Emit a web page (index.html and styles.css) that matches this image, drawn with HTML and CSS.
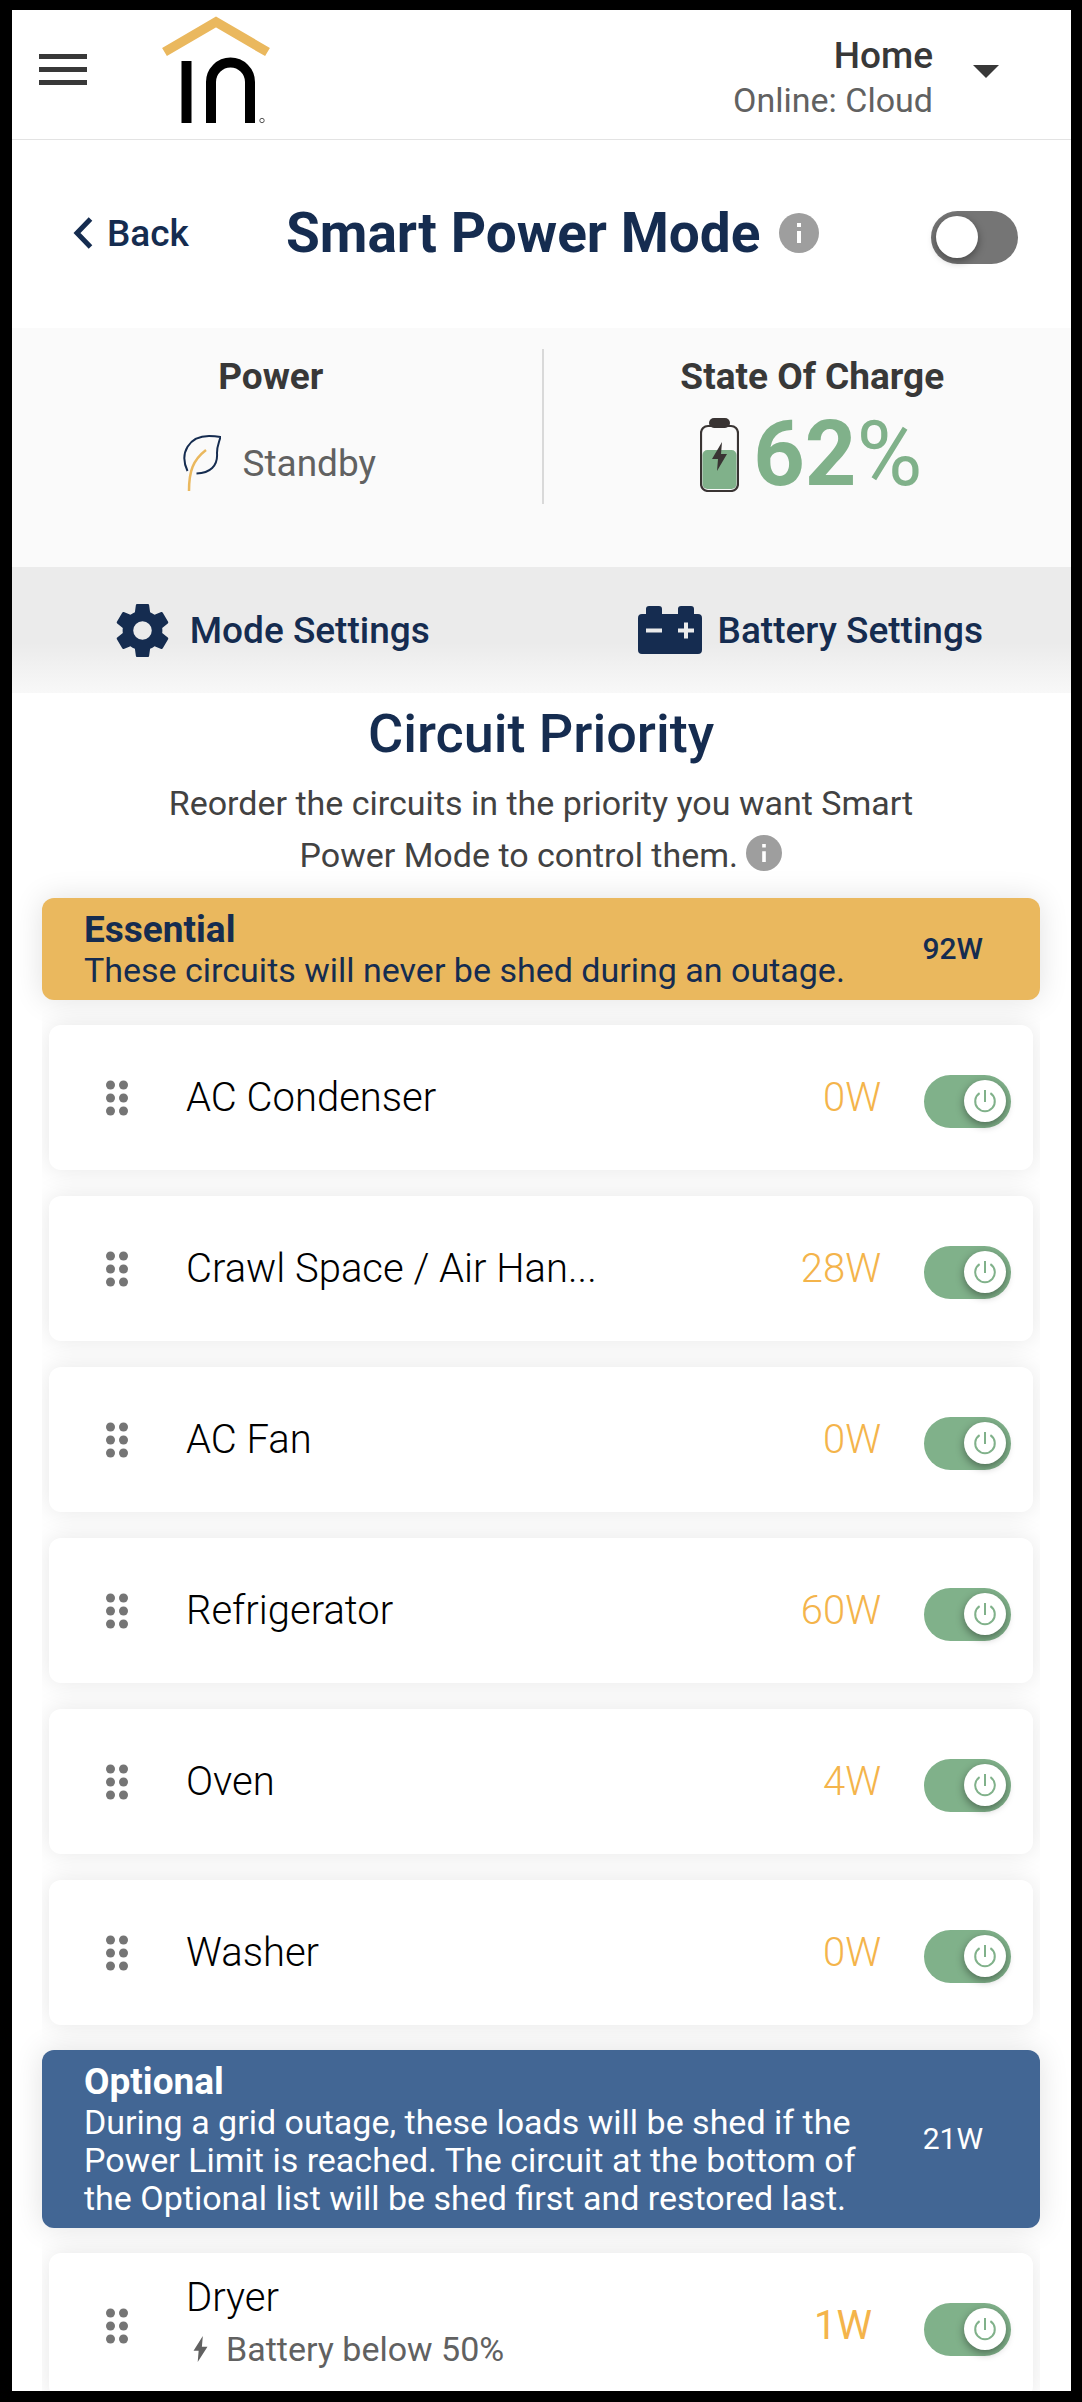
FILE: index.html
```html
<!DOCTYPE html>
<html lang="en">
<head>
    <meta charset="utf-8">
    <meta name="viewport" content="width=device-width, initial-scale=1">
    <title>Smart Power Mode</title>
    <link rel="stylesheet" href="styles.css">
</head>
<body>
    <!-- shared icons -->
    <svg class="sprite" aria-hidden="true">
        <symbol id="dots" viewBox="0 0 22 36">
            <circle cx="4.5" cy="5" r="4.5"/><circle cx="17.5" cy="5" r="4.5"/>
            <circle cx="4.5" cy="18" r="4.5"/><circle cx="17.5" cy="18" r="4.5"/>
            <circle cx="4.5" cy="31" r="4.5"/><circle cx="17.5" cy="31" r="4.5"/>
        </symbol>
        <symbol id="power" viewBox="0 0 24 24">
            <path d="M12 1v12M6.600 4.200a9.800 9.800 0 1 0 10.800 0" fill="none" stroke="currentColor" stroke-width="2"/>
        </symbol>
        <symbol id="info" viewBox="0 0 40 40">
            <circle cx="20" cy="20" r="20" fill="#9e9e9e"/>
            <path d="M18 10h4v4h-4zM18 18h4v12h-4z" fill="#fff"/>
        </symbol>
        <symbol id="bolt" viewBox="0 0 15 28">
            <path d="M10 0L0 16h5.500L4.500 28 15 11.500H9z"/>
        </symbol>
    </svg>

    <div class="screen">
        <header class="topbar">
            <button class="menu" aria-label="Menu"><span></span><span></span><span></span></button>
            <svg class="logo" viewBox="0 0 108 108" role="img" aria-label="Logo">
                <path d="M2.500 36L54 6l51.500 30" fill="none" stroke="#eab85e" stroke-width="9.500"/>
                <path d="M24.500 45v62M49 107V66a19.500 19.500 0 0 1 39 0v41" fill="none" stroke="#000" stroke-width="10"/>
                <circle cx="100" cy="104.500" r="2.200" fill="none" stroke="#555" stroke-width="1"/>
            </svg>
            <button class="site">
                <span class="site-text">
                    <span class="site-name">Home</span>
                    <span class="site-status">Online: Cloud</span>
                </span>
                <span class="caret"></span>
            </button>
        </header>

        <section class="titlebar">
            <a class="back" href="#">
                <svg viewBox="0 0 20 32"><path d="M17.500 2L4 16l13.500 14" fill="none" stroke="currentColor" stroke-width="5"/></svg>
                Back
            </a>
            <h1>Smart Power Mode</h1>
            <button class="info" aria-label="About Smart Power Mode"><svg><use href="#info"/></svg></button>
            <label class="switch">
                <input type="checkbox" aria-label="Smart Power Mode">
                <span class="thumb"></span>
            </label>
        </section>

        <section class="stats">
            <div class="stat">
                <h2>Power</h2>
                <div class="stat-value standby">
                    <svg class="leaf" viewBox="0 0 38 57" fill="none" stroke-width="2">
                        <path d="M4.500 36C-4 18 6 1 26 1q6 0 11.500 1c-2 7-3.500 9-3.500 16 1 13-7 20-20.500 20.500" stroke="#152c50"/>
                        <path d="M6 56c0-20 4-31 17-41" stroke="#eab85e" stroke-width="2.500"/>
                    </svg>
                    Standby
                </div>
            </div>
            <div class="stat">
                <h2>State Of Charge</h2>
                <div class="stat-value charge">
                    <svg class="cell" viewBox="0 0 39 74">
                        <rect x="9" y="0" width="21" height="10" rx="5" fill="#393433"/>
                        <rect x="2.500" y="32" width="34" height="39" rx="5" fill="#80b18a"/>
                        <rect x="1" y="8" width="37" height="65" rx="7" fill="none" stroke="#393433" stroke-width="2.200"/>
                        <path d="M22 24L12 41h6l-1 12 10-17h-6z" fill="#393433"/>
                    </svg>
                    <span><b>62</b>%</span>
                </div>
            </div>
        </section>

        <nav class="actions">
            <a href="#">
                <svg class="gear" viewBox="2 2 20 20"><path fill="currentColor" d="M19.430 12.980c.04-.32.07-.64.07-.98s-.03-.66-.07-.98l2.110-1.650c.19-.15.24-.42.12-.64l-2-3.460c-.12-.22-.39-.3-.61-.22l-2.490 1c-.52-.4-1.080-.73-1.690-.98l-.38-2.650C14.460 2.180 14.250 2 14 2h-4c-.25 0-.46.18-.49.42l-.38 2.650c-.61.25-1.170.59-1.690.98l-2.490-1c-.23-.09-.49 0-.61.22l-2 3.460c-.13.22-.07.49.12.64l2.110 1.650c-.04.32-.07.65-.07.98s.03.66.07.98l-2.110 1.650c-.19.15-.24.42-.12.64l2 3.460c.12.22.39.3.61.22l2.490-1c.52.4 1.080.73 1.690.98l.38 2.650c.03.24.24.42.49.42h4c.25 0 .46-.18.49-.42l.38-2.650c.61-.25 1.170-.59 1.690-.98l2.490 1c.23.09.49 0 .61-.22l2-3.460c.12-.22.07-.49-.12-.64l-2.110-1.650zM12 15.500a3.500 3.500 0 1 1 0-7 3.500 3.500 0 0 1 0 7z"/></svg>
                Mode Settings
            </a>
            <a href="#">
                <svg class="car-battery" viewBox="0 0 64 48">
                    <path fill="currentColor" d="M8 8V3q0-3 3-3h10q3 0 3 3v5h16V3q0-3 3-3h10q3 0 3 3v5h4q4 0 4 4v32q0 4-4 4H4q-4 0-4-4V12q0-4 4-4z"/>
                    <path d="M8 24.500h16M40 24.500h16M48 16.500v16" stroke="#ebebeb" stroke-width="4"/>
                </svg>
                Battery Settings
            </a>
        </nav>

        <main class="circuits">
            <h2>Circuit Priority</h2>
            <p class="intro">Reorder the circuits in the priority you want Smart<br>Power Mode to control them.
                <button class="info small" aria-label="About circuit priority"><svg><use href="#info"/></svg></button></p>

            <div class="group essential">
                <div>
                    <h3>Essential</h3>
                    <p>These circuits will never be shed during an outage.</p>
                </div>
                <span class="total">92W</span>
            </div>

            <ul class="list">
                <li class="card">
                    <button class="drag" aria-label="Move AC Condenser"><svg><use href="#dots"/></svg></button>
                    <label class="name" for="c1">AC Condenser</label>
                    <span class="watts">0W</span>
                    <span class="switch"><input type="checkbox" id="c1" checked><span class="thumb"><svg><use href="#power"/></svg></span></span>
                </li>
                <li class="card">
                    <button class="drag" aria-label="Move Crawl Space"><svg><use href="#dots"/></svg></button>
                    <label class="name" for="c2">Crawl Space / Air Han...</label>
                    <span class="watts">28W</span>
                    <span class="switch"><input type="checkbox" id="c2" checked><span class="thumb"><svg><use href="#power"/></svg></span></span>
                </li>
                <li class="card">
                    <button class="drag" aria-label="Move AC Fan"><svg><use href="#dots"/></svg></button>
                    <label class="name" for="c3">AC Fan</label>
                    <span class="watts">0W</span>
                    <span class="switch"><input type="checkbox" id="c3" checked><span class="thumb"><svg><use href="#power"/></svg></span></span>
                </li>
                <li class="card">
                    <button class="drag" aria-label="Move Refrigerator"><svg><use href="#dots"/></svg></button>
                    <label class="name" for="c4">Refrigerator</label>
                    <span class="watts">60W</span>
                    <span class="switch"><input type="checkbox" id="c4" checked><span class="thumb"><svg><use href="#power"/></svg></span></span>
                </li>
                <li class="card">
                    <button class="drag" aria-label="Move Oven"><svg><use href="#dots"/></svg></button>
                    <label class="name" for="c5">Oven</label>
                    <span class="watts">4W</span>
                    <span class="switch"><input type="checkbox" id="c5" checked><span class="thumb"><svg><use href="#power"/></svg></span></span>
                </li>
                <li class="card">
                    <button class="drag" aria-label="Move Washer"><svg><use href="#dots"/></svg></button>
                    <label class="name" for="c6">Washer</label>
                    <span class="watts">0W</span>
                    <span class="switch"><input type="checkbox" id="c6" checked><span class="thumb"><svg><use href="#power"/></svg></span></span>
                </li>
            </ul>

            <div class="group optional">
                <div>
                    <h3>Optional</h3>
                    <p>During a grid outage, these loads will be shed if the<br>Power Limit is reached. The circuit at the bottom of<br>the Optional list will be shed first and restored last.</p>
                </div>
                <span class="total">21W</span>
            </div>

            <ul class="list">
                <li class="card">
                    <button class="drag" aria-label="Move Dryer"><svg><use href="#dots"/></svg></button>
                    <div class="name with-note">
                        <label for="c7">Dryer</label>
                        <div class="note"><svg><use href="#bolt"/></svg>Battery below 50%</div>
                    </div>
                    <span class="watts regular">1W</span>
                    <span class="switch"><input type="checkbox" id="c7" checked><span class="thumb"><svg><use href="#power"/></svg></span></span>
                </li>
            </ul>
        </main>
    </div>
</body>
</html>
```
FILE: styles.css
```css
*{
    box-sizing: border-box;
}
body{
    margin: 0;
    background-color: #000;
    color: #383838;
    font-family: Roboto, "Liberation Sans", sans-serif;
    font-size: 37px;
}
h1, h2, h3, p, ul{
    margin: 0;
    padding: 0;
}
button{
    padding: 0;
    border: 0;
    background: none;
    color: inherit;
    font: inherit;
    cursor: pointer;
}
a{
    color: #152c50;
    text-decoration: none;
    font-weight: 500;
}
svg{
    display: block;
    flex: none;
}
.sprite{
    position: absolute;
    width: 0;
    height: 0;
}
.screen{
    height: 100vh;
    border: solid #000;
    border-width: 10px 11px 11px 12px;
    background-color: #fff;
    overflow: hidden;
}

/* top bar */
.topbar{
    display: flex;
    align-items: center;
    height: 130px;
    padding: 0 72px 0 27px;
    border-bottom: 1px solid #e3e3e3;
}
.menu{
    display: flex;
    flex-direction: column;
    gap: 8px;
    width: 48px;
    padding-bottom: 10px;
}
.menu span{
    height: 5px;
    background-color: #383838;
}
.logo{
    width: 108px;
    height: 108px;
    margin-left: 75px;
    margin-bottom: 9px;
}
.site{
    display: flex;
    align-items: center;
    gap: 40px;
    margin-left: auto;
    padding-top: 6px;
    text-align: right;
}
.site-name, .site-status{
    display: block;
    line-height: 44px;
}
.site-name{
    font-weight: 500;
}
.site-status{
    font-size: 34px;
    color: #616161;
}
.caret{
    border: 13px solid transparent;
    border-top-color: #383838;
    border-bottom: 0;
    margin-bottom: 12px;
}

/* title */
.titlebar{
    display: flex;
    align-items: center;
    height: 188px;
    padding: 0 53px 2px 61px;
}
.back{
    display: flex;
    align-items: center;
    gap: 14px;
}
.back svg{
    width: 20px;
    height: 32px;
}
.titlebar h1{
    margin-left: 97px;
    font-size: 55px;
    line-height: 64px;
    color: #152c50;
}
.info{
    margin-left: 18px;
}
.info svg{
    width: 40px;
    height: 40px;
}
.titlebar .switch{
    margin-left: auto;
}

/* switches */
.switch{
    position: relative;
    width: 87px;
    height: 53px;
    margin-top: 8px;
    flex: none;
}
.switch input{
    display: block;
    appearance: none;
    width: 100%;
    height: 100%;
    margin: 0;
    border-radius: 27px;
    background-color: #757575;
    cursor: pointer;
}
.switch input:checked{
    background-color: #80b18a;
}
.thumb{
    position: absolute;
    top: 5px;
    left: 5px;
    width: 42px;
    height: 42px;
    border-radius: 50%;
    background-color: #fff;
    box-shadow: 0 3px 8px rgba(0, 0, 0, .4);
    pointer-events: none;
    display: grid;
    place-items: center;
    color: #80b18a;
}
.switch input:checked + .thumb{
    left: 40px;
}
.thumb svg{
    width: 24px;
    height: 24px;
}

/* power and charge */
.stats{
    display: flex;
    height: 239px;
    padding: 21px 0 63px;
    background-color: #fafafa;
}
.stat{
    width: 50%;
    padding-right: 12px;
    text-align: center;
}
.stat + .stat{
    padding: 0 0 0 10px;
    border-left: 2px solid #d9d9d9;
}
.stat h2{
    padding-top: 7px;
    font-size: 37px;
    line-height: 42px;
}
.stat-value{
    display: flex;
    justify-content: center;
    align-items: center;
}
.standby{
    gap: 21px;
    padding: 37px 0 0 18px;
    color: #616161;
}
.leaf{
    width: 38px;
    height: 57px;
}
.charge{
    gap: 14px;
    padding-right: 2px;
    color: #80b18a;
    font-size: 90px;
    line-height: 114px;
}
.cell{
    width: 39px;
    height: 74px;
}

/* settings links */
.actions{
    display: flex;
    height: 126px;
    background: linear-gradient(#ebebeb 60%, #f8f8f8);
}
.actions a{
    flex: 1;
    display: flex;
    justify-content: center;
    align-items: center;
    padding-right: 8px;
}
.actions a + a{
    padding: 0 0 0 8px;
}
.gear{
    width: 53px;
    height: 53px;
    margin-right: 21px;
}
.car-battery{
    width: 64px;
    height: 48px;
    margin-right: 16px;
}

/* circuits */
.circuits{
    padding: 9px 31px 0 30px;
}
.circuits h2{
    color: #152c50;
    font-size: 54px;
    font-weight: 500;
    line-height: 64px;
    text-align: center;
}
.intro{
    padding: 11px 0 17px;
    color: #424242;
    font-size: 34px;
    line-height: 52px;
    text-align: center;
}
.intro .info{
    margin-left: 0;
    vertical-align: -4px;
}
.small svg{
    width: 36px;
    height: 36px;
}
.group{
    display: flex;
    align-items: center;
    justify-content: space-between;
    padding: 11px 57px 11px 42px;
    border-radius: 12px;
    font-size: 34px;
    line-height: 38px;
    box-shadow: 0 0 30px rgba(0, 0, 0, .12);
}
.group h3{
    font-size: 37px;
    line-height: 42px;
}
.essential{
    background-color: #eab85e;
    color: #152c50;
}
.optional{
    background-color: #426694;
    color: #fff;
}
.total{
    font-size: 30px;
}
.essential .total{
    font-weight: 500;
}
.list{
    display: flex;
    flex-direction: column;
    gap: 26px;
    padding: 25px 7px 25px;
    list-style: none;
    overflow: hidden;
}
.card{
    display: flex;
    align-items: center;
    height: 145px;
    padding: 0 22px 0 57px;
    border-radius: 12px;
    background-color: #fff;
    box-shadow: 0 0 26px rgba(0, 0, 0, .1);
}
.drag svg{
    width: 22px;
    height: 36px;
    fill: #757575;
}
.name{
    margin-left: 58px;
    color: #000;
    font-size: 40px;
    font-weight: 300;
    line-height: 54px;
}
.with-note{
    padding-bottom: 8px;
}
.note{
    display: flex;
    align-items: center;
    gap: 18px;
    padding-left: 7px;
    color: #616161;
    font-size: 34px;
    font-weight: 400;
    line-height: 48px;
}
.note svg{
    width: 15px;
    height: 26px;
    fill: #616161;
}
.watts{
    margin: 0 43px 0 auto;
    color: #f4b44b;
    font-size: 40px;
    font-weight: 300;
}
.watts.regular{
    margin-right: 52px;
    font-weight: 400;
}
```
